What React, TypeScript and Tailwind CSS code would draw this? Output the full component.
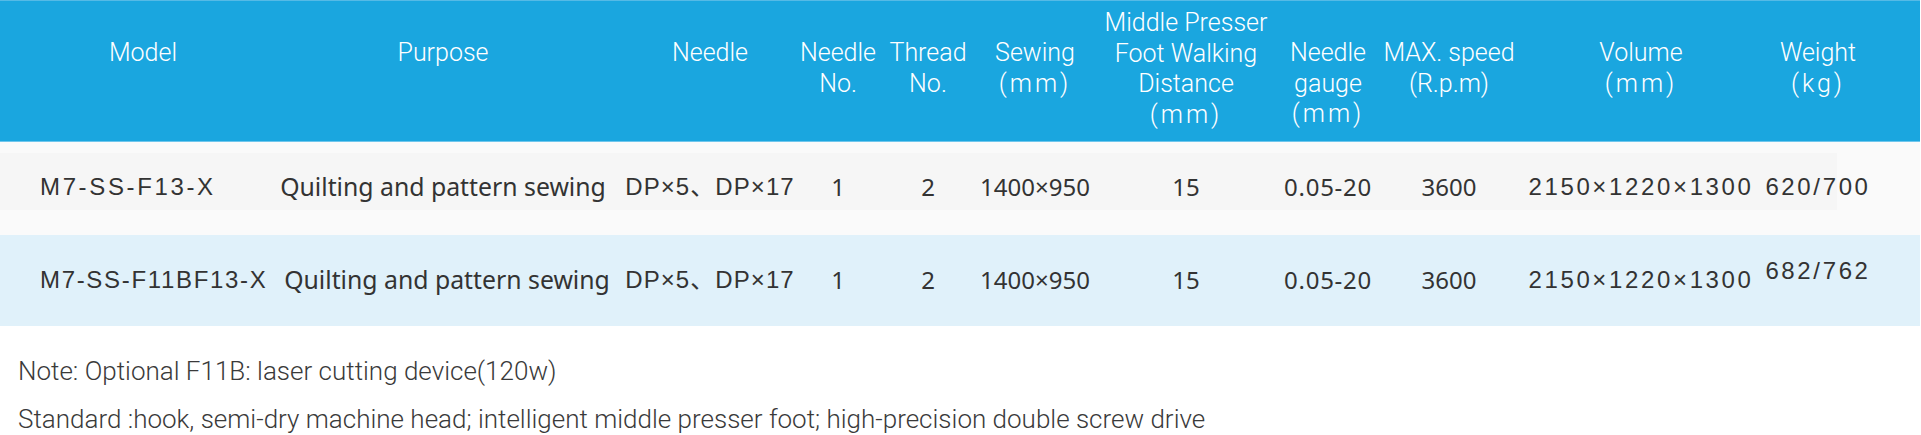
import React from 'react';

// column widths chosen so every label sits on the same centre as the reference
const grid =
  'grid w-[1920px] grid-cols-[286px_314px_220px_36px_144px_70px_232px_52px_190px_194px_160px_1fr]';

const heads: string[][] = [
  ['Model'],
  ['Purpose'],
  ['Needle'],
  ['Needle', 'No.'],
  ['Thread', 'No.'],
  ['Sewing', '(mm)'],
  ['Middle Presser', 'Foot Walking', 'Distance', '(mm)'],
  ['Needle', 'gauge', '(mm)'],
  ['MAX. speed', '(R.p.m)'],
  ['Volume', '(mm)'],
  ['Weight', '(kg)'],
];

const rows = [
  {
    model: 'M7-SS-F13-X',
    modelTrack: 'tracking-[0.11em]',
    purpose: '',
    weight: '620/700',
    raised: false,
    bg: "bg-[#fafafa] bg-[linear-gradient(#f6f6f6,#f6f6f6)] bg-no-repeat bg-[length:1837px_57px] bg-[position:0_11px]",
    h: 'h-[93px] pb-[3px]',
  },
  {
    model: 'M7-SS-F11BF13-X',
    modelTrack: 'tracking-[0.07em]',
    purpose: 'pl-[8px]',
    weight: '682/762',
    raised: true,
    bg: 'bg-[#e0f1fa]',
    h: 'h-[91px] pb-[1px]',
  },
];

const arial = "font-['Liberation_Sans','Noto_Sans_CJK_SC',sans-serif] text-[24px]";
const sans = "font-['Noto_Sans',sans-serif] text-[24px]";

function Cell({ children, className = '' }: { children: React.ReactNode; className?: string }) {
  return (
    <div className={`flex items-center justify-center whitespace-nowrap ${className}`}>{children}</div>
  );
}

export default function App() {
  return (
    <div className="min-h-[435px] w-[1921px] bg-white text-[#333]">
      {/* header */}
      <div className="h-[142px] w-[1920px] border-t border-b border-t-[#55bae6] border-b-[#6fc6ec] bg-[#1aa6df]">
        <div className={`${grid} h-full`}>
          {heads.map((lines, i) => (
            <div
              key={i}
              className={`flex flex-col items-center whitespace-nowrap font-['Roboto','Noto_Sans',sans-serif] text-[25px] font-light leading-[30.5px] text-white ${
                lines.length === 4 ? 'pt-[7px]' : 'pt-[37px]'
              }`}
            >
              {lines.map((l) => (
                <span key={l} className={l === '(mm)' || l === '(kg)' ? 'tracking-[0.12em]' : ''}>
                  {l}
                </span>
              ))}
            </div>
          ))}
        </div>
      </div>

      {/* rows */}
      {rows.map((r) => (
        <div key={r.model} className={`${grid} ${r.h} ${r.bg}`}>
          <Cell className={`justify-start pl-[40px] ${arial} ${r.modelTrack}`}>{r.model}</Cell>
          <Cell className={`font-['Noto_Sans',sans-serif] text-[24.8px] ${r.purpose}`}>
            Quilting and pattern sewing
          </Cell>
          <Cell className={`${arial} tracking-[0.045em]`}>DP×5、DP×17</Cell>
          <Cell className={sans}>1</Cell>
          <Cell className={sans}>2</Cell>
          <Cell className={sans}>1400×950</Cell>
          <Cell className={sans}>15</Cell>
          <Cell className={`${sans} tracking-[0.03em]`}>0.05-20</Cell>
          <Cell className={sans}>3600</Cell>
          <Cell className={`${arial} tracking-[0.11em]`}>2150×1220×1300</Cell>
          <Cell className={`${arial} tracking-[0.11em] ${r.raised ? 'pb-[18px]' : ''}`}>{r.weight}</Cell>
          <div />
        </div>
      ))}

      {/* notes */}
      <div className="mt-[21px] pl-[18px] font-['Roboto','Noto_Sans',sans-serif] text-[26px] font-light leading-[48px] text-[#3a3a3a]">
        <p>Note: Optional F11B: laser cutting device(120w)</p>
        <p>Standard :hook, semi-dry machine head; intelligent middle presser foot; high-precision double screw drive</p>
      </div>
    </div>
  );
}
